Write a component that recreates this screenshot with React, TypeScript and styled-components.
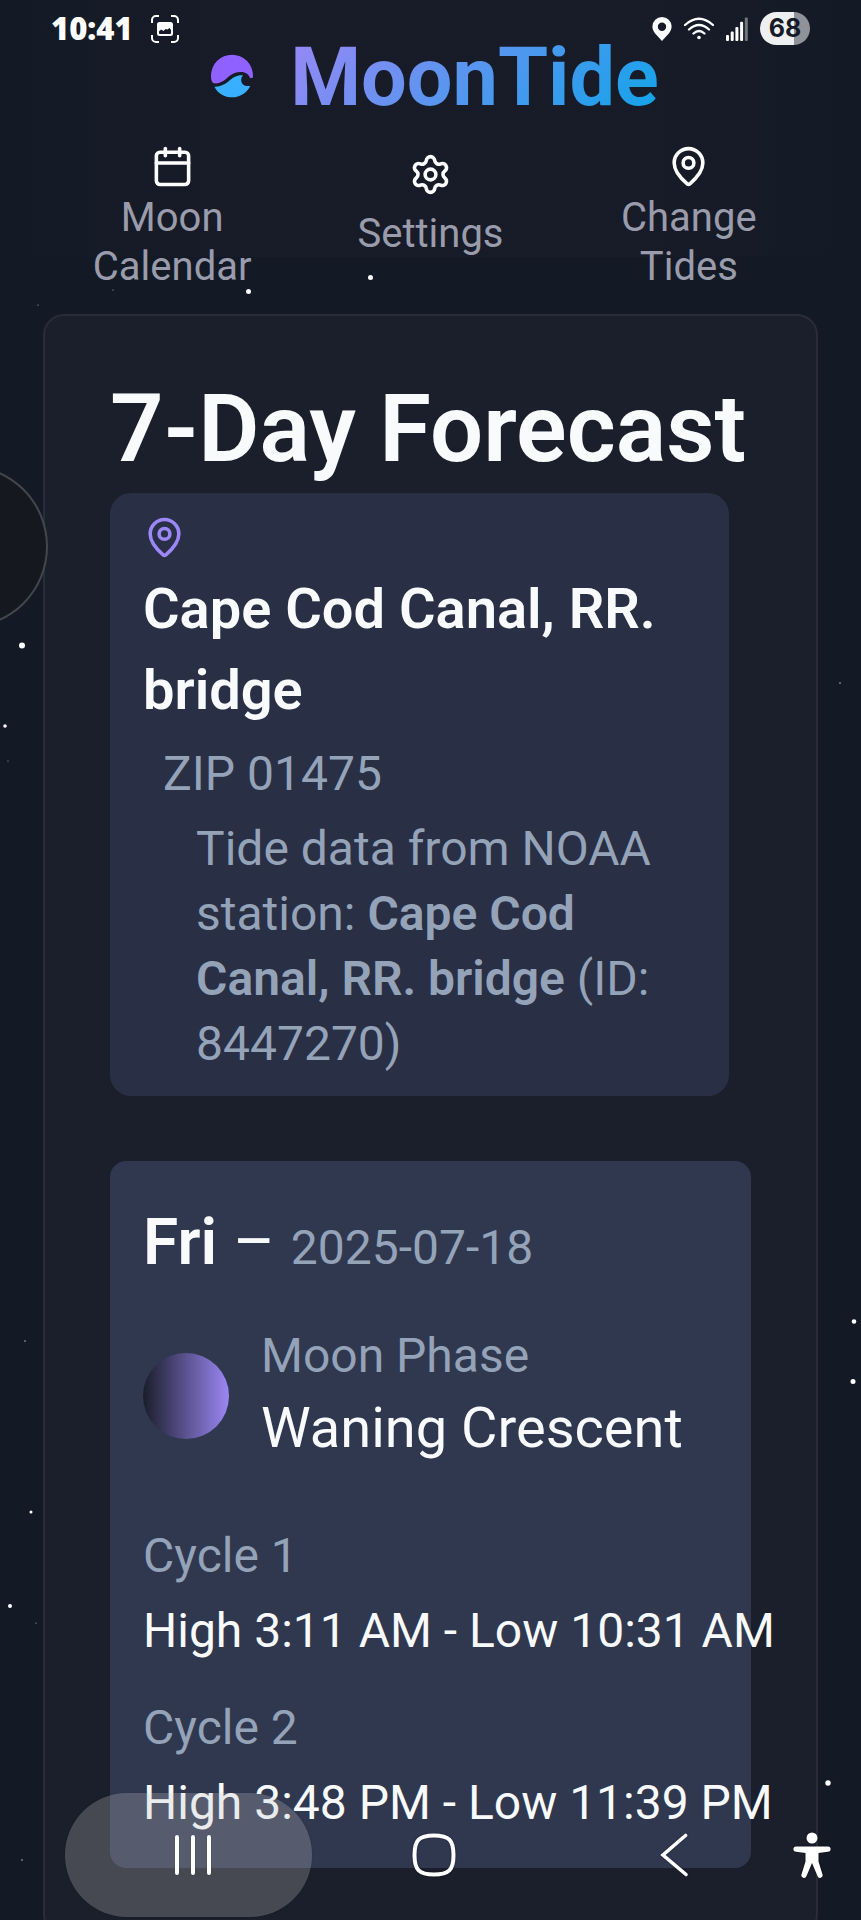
import React from 'react';
import styled, { createGlobalStyle } from 'styled-components';
import { Calendar, MapPin, Settings } from 'lucide-react';

const GlobalStyle = createGlobalStyle`
  *, *::before, *::after { box-sizing: border-box; }
  body {
    margin: 0;
    background: #131a26;
    color: #f8fafc;
    font-family: Roboto, "Liberation Sans", sans-serif;
  }
  h1, h2, h3, p { margin: 0; font-weight: 400; }
  button { border: 0; padding: 0; background: none; color: inherit; font: inherit; }
`;

const Screen = styled.div`
  position: relative;
  height: 100vh;
  overflow: hidden;
  background: #131a26;
`;

const StarField = styled.svg`
  position: absolute;
  inset: 0;
  width: 100%;
  height: 100%;
  pointer-events: none;
`;

/* Device status bar, floating over the page header */
const StatusBar = styled.div`
  position: absolute;
  top: 12px;
  left: 0;
  right: 0;
  z-index: 3;
  display: flex;
  align-items: center;
  justify-content: space-between;
  height: 33px;
  padding: 0 51px;
`;

const StatusGroup = styled.div<{ $gap: number }>`
  display: flex;
  align-items: center;
  gap: ${({ $gap }) => $gap}px;
`;

const Clock = styled.time`
  font: 800 31px/33px "Open Sans", "Noto Sans", sans-serif;
  color: #fff;
`;

const Battery = styled.span`
  display: flex;
  align-items: center;
  justify-content: center;
  width: 50px;
  height: 33px;
  border-radius: 17px;
  background: linear-gradient(90deg, #eeeff1 68%, #90929a 68%);
  color: #161b28;
  font: 700 25px/33px Inter, "Liberation Sans", sans-serif;
`;

const Header = styled.header`
  position: relative;
  z-index: 2;
  padding: 29px 43px 0;
  background:
    linear-gradient(90deg, rgba(32, 29, 44, 0) 0%, rgba(32, 29, 44, 0.35) 25%, rgba(32, 29, 44, 0.35) 75%, rgba(32, 29, 44, 0) 100%)
    0 0 / 100% 257px no-repeat;
`;

const Brand = styled.div`
  display: flex;
  align-items: center;
  justify-content: center;
  gap: 28px;
`;

const BrandName = styled.span`
  font-size: 81px;
  line-height: 97px;
  font-weight: 700;
  background: linear-gradient(135deg, #9b87f5, #0ea5e9);
  background-clip: text;
  -webkit-background-clip: text;
  color: transparent;
`;

const Nav = styled.nav`
  display: grid;
  grid-template-columns: repeat(3, 1fr);
  align-items: start;
  margin-top: 19px;
`;

const NavItem = styled.button<{ $single?: boolean }>`
  display: flex;
  flex-direction: column;
  align-items: center;
  gap: ${({ $single }) => ($single ? 13 : 5)}px;
  padding: ${({ $single }) => ($single ? 8 : 0)}px 32px 0;
  color: #fff;
`;

const NavLabel = styled.span`
  font-size: 40px;
  line-height: 49px;
  color: #9a9cab;
  text-align: center;
`;

const Panel = styled.main`
  position: relative;
  margin: 23px 43px 0;
  padding: 65px;
  border: 2px solid #2a2c39;
  border-radius: 21px;
  background: #1b1e2b;
`;

const Title = styled.h1`
  font-size: 94px;
  line-height: 97px;
  font-weight: 600;
  white-space: nowrap;
`;

const LocationCard = styled.section`
  display: flex;
  flex-direction: column;
  align-items: flex-start;
  gap: 10px;
  margin: 15px 22px 65px 0;
  padding: 23px 33px 20px;
  border-radius: 21px;
  background: #292f45;
`;

const StationName = styled.h2`
  font-size: 56px;
  line-height: 81px;
  font-weight: 600;
`;

const Zip = styled.p`
  padding-left: 20px;
  font-size: 48px;
  line-height: 65px;
  color: #94a3b8;
`;

const StationNote = styled.p`
  padding-left: 53px;
  font-size: 48px;
  line-height: 65px;
  color: #94a3b8;

  strong { font-weight: 600; }
`;

const DayCard = styled.article`
  padding: 33px;
  border-radius: 16px;
  background: #303850;
`;

const DayHeading = styled.h3`
  font-size: 64px;
  line-height: 97px;
  font-weight: 600;
  white-space: nowrap;
`;

const Dash = styled.span`
  font-weight: 400;
`;

const DayDate = styled.time`
  font-size: 48px;
  line-height: 65px;
  font-weight: 400;
  color: #94a3b8;
`;

const PhaseRow = styled.div`
  display: flex;
  align-items: center;
  gap: 32px;
  margin: 32px 0 54px;
`;

const MoonDisc = styled.span`
  flex: none;
  width: 86px;
  height: 86px;
  border-radius: 50%;
  background: linear-gradient(90deg, #1b1e2b, #9b87f5);
`;

const Muted = styled.p`
  font-size: 48px;
  line-height: 65px;
  color: #94a3b8;
`;

const PhaseName = styled.p`
  font-size: 56px;
  line-height: 81px;
  white-space: nowrap;
`;

const Cycles = styled.div`
  display: flex;
  flex-direction: column;
  gap: 32px;
`;

const Cycle = styled.div`
  display: flex;
  flex-direction: column;
  gap: 10px;
`;

const Tides = styled.p`
  font-size: 48px;
  line-height: 65px;
  white-space: nowrap;
`;

/* Round edge handle, half off the left side of the screen */
const EdgeHandle = styled.button`
  position: absolute;
  z-index: 2;
  top: 465px;
  left: -115px;
  width: 163px;
  height: 163px;
  border: 2px solid rgba(255, 255, 255, 0.2);
  border-radius: 50%;
  background: rgba(21, 24, 29, 0.95);
`;

const SystemNav = styled.div`
  position: absolute;
  z-index: 3;
  bottom: 3px;
  left: 0;
  right: 0;
  display: grid;
  grid-template-columns: 247fr 243fr 238fr 38px;
  height: 124px;
  padding: 0 30px 0 65px;
`;

const SystemButton = styled.button<{ $pressed?: boolean }>`
  display: flex;
  align-items: center;
  justify-content: center;
  border-radius: 62px;
  padding-left: ${({ $pressed }) => ($pressed ? 8 : 0)}px;
  background: ${({ $pressed }) => ($pressed ? 'rgba(255, 255, 255, 0.2)' : 'none')};
  filter: drop-shadow(0 0 1px rgba(0, 0, 0, 0.4));

  svg { flex: none; }
`;

const stars: [number, number, number][] = [
  [113, 290, 0.6], [248.5, 291.5, 2.5], [370.5, 277.5, 2.5], [38, 305, 0.6],
  [22, 645.5, 3], [5, 726, 1.8], [8, 761, 0.6], [840, 683, 0.8],
  [25, 1341, 0.8], [854, 1321.5, 2.3], [853, 1381.5, 2.5], [31, 1512, 1.5],
  [10, 1606, 2], [36, 1623, 0.6], [22, 1860, 0.8], [828, 1783, 2.7],
];

const cycles = [
  { name: 'Cycle 1', tides: 'High 3:11 AM - Low 10:31 AM' },
  { name: 'Cycle 2', tides: 'High 3:48 PM - Low 11:39 PM' },
];

const Logo = () => (
  <svg width="60" height="60" viewBox="66 53 180 180" aria-hidden="true">
    <path
      fill="#8f61fe"
      d="M99 158C94 152 93 145 93 136A63 63 0 0 1 219 136Q219 143 217 143L210 143C207 132 196 124 180 125C160 126 148 137 138 146C127 155 114 162 99 158Z"
    />
    <path
      fill="#38b0ff"
      d="M103 169C120 170 134 163 146 153C158 142 170 134 189 135C182 143 182 153 187 160C193 167 202 168 211 167C200 188 180 201 157 201C133 201 113 189 103 169Z"
    />
  </svg>
);

const CaptureIcon = () => (
  <svg width="28" height="28" viewBox="0 0 28 28" fill="none" aria-hidden="true">
    <path
      d="M1 8V5a4 4 0 0 1 4-4h3M20 1h3a4 4 0 0 1 4 4v3M27 20v3a4 4 0 0 1-4 4h-3M8 27H5a4 4 0 0 1-4-4v-3"
      stroke="#fff"
      strokeWidth="2"
    />
    <path
      fill="#fff"
      fillRule="evenodd"
      d="M8.500 7h11A2.500 2.500 0 0 1 22 9.500v9a2.500 2.500 0 0 1-2.500 2.500h-11A2.500 2.500 0 0 1 6 18.500v-9A2.500 2.500 0 0 1 8.500 7ZM8 18q0 1 1 1h10q1 0 1-1v-3l-1.500-2-2 1.500-2-0.500-2 2-2.500-1.500L8 16.500Z"
    />
  </svg>
);

const LocationIcon = () => (
  <svg width="20" height="24" viewBox="0 0 20 24" aria-hidden="true">
    <path
      fill="#fff"
      fillRule="evenodd"
      d="M10 0a9.600 9.600 0 0 1 9.600 9.600C19.600 15 15 18.500 10 24 5 18.500 0.400 15 0.400 9.600A9.600 9.600 0 0 1 10 0Zm0 5.500a4.200 4.200 0 1 0 0 8.400 4.200 4.200 0 0 0 0-8.400Z"
    />
  </svg>
);

const WifiIcon = () => (
  <svg width="30" height="24" viewBox="0 0 30 24" fill="none" stroke="#fff" strokeWidth="2.300" aria-hidden="true">
    <path d="M1 8Q15-4.500 29 8M5 12.500Q15 3.500 25 12.500M9.500 16.500Q15 11.500 20.500 16.500" strokeLinecap="round" />
    <circle cx="15" cy="20.500" r="1.800" fill="#fff" stroke="none" />
  </svg>
);

const SignalIcon = () => (
  <svg width="22" height="24" viewBox="0 0 22 24" fill="#fff" aria-hidden="true">
    <rect x="0" y="18" width="3" height="6" rx="1" />
    <rect x="4.700" y="14.500" width="3" height="9.500" rx="1" />
    <rect x="9.400" y="10" width="3" height="14" rx="1" />
    <rect x="14.100" y="4.700" width="3" height="19.300" rx="1" />
    <rect x="18.800" y="0.600" width="3" height="23.400" rx="1" opacity="0.400" />
  </svg>
);

export default function App() {
  return (
    <Screen>
      <GlobalStyle />
      <StarField aria-hidden="true">
        {stars.map(([x, y, r]) => (
          <circle key={`${x}-${y}`} cx={x} cy={y} r={r} fill="#fff" opacity={r < 1 ? 0.7 : 1} />
        ))}
      </StarField>

      <StatusBar>
        <StatusGroup $gap={18}>
          <Clock>10:41</Clock>
          <CaptureIcon />
        </StatusGroup>
        <StatusGroup $gap={12}>
          <LocationIcon />
          <WifiIcon />
          <SignalIcon />
          <Battery>68</Battery>
        </StatusGroup>
      </StatusBar>

      <Header>
        <Brand>
          <Logo />
          <BrandName>MoonTide</BrandName>
        </Brand>
        <Nav>
          <NavItem type="button">
            <Calendar size={43} />
            <NavLabel>Moon Calendar</NavLabel>
          </NavItem>
          <NavItem type="button" $single>
            <Settings size={43} />
            <NavLabel>Settings</NavLabel>
          </NavItem>
          <NavItem type="button">
            <MapPin size={43} />
            <NavLabel>Change Tides</NavLabel>
          </NavItem>
        </Nav>
      </Header>

      <Panel>
        <Title>7-Day Forecast</Title>
        <LocationCard>
          <MapPin size={43} color="#9b87f5" />
          <StationName>Cape Cod Canal, RR. bridge</StationName>
          <Zip>ZIP 01475</Zip>
          <StationNote>
            Tide data from NOAA station: <strong>Cape Cod Canal, RR. bridge</strong> (ID: 8447270)
          </StationNote>
        </LocationCard>

        <DayCard>
          <DayHeading>
            Fri <Dash>–</Dash> <DayDate dateTime="2025-07-18">2025-07-18</DayDate>
          </DayHeading>
          <PhaseRow>
            <MoonDisc />
            <div>
              <Muted>Moon Phase</Muted>
              <PhaseName>Waning Crescent</PhaseName>
            </div>
          </PhaseRow>
          <Cycles>
            {cycles.map((cycle) => (
              <Cycle key={cycle.name}>
                <Muted>{cycle.name}</Muted>
                <Tides>{cycle.tides}</Tides>
              </Cycle>
            ))}
          </Cycles>
        </DayCard>
      </Panel>

      <EdgeHandle type="button" aria-label="Open edge panel" />

      <SystemNav>
        <SystemButton type="button" aria-label="Recent apps" $pressed>
          <svg width="40" height="44" viewBox="0 0 40 44" stroke="#fff" strokeWidth="4" strokeLinecap="round">
            <path d="M4 4v36M20 4v36M36 4v36" />
          </svg>
        </SystemButton>
        <SystemButton type="button" aria-label="Home">
          <svg width="44" height="44" viewBox="0 0 44 44" fill="none" stroke="#fff" strokeWidth="4">
            <path d="M22 2.500C37 2.500 41.500 7 41.500 22S37 41.500 22 41.500 2.500 37 2.500 22 7 2.500 22 2.500Z" />
          </svg>
        </SystemButton>
        <SystemButton type="button" aria-label="Back">
          <svg width="28" height="44" viewBox="0 0 28 44" fill="none" stroke="#fff" strokeWidth="3.600" strokeLinecap="round">
            <path d="M25.500 2.500L3 22l23 19.500" />
          </svg>
        </SystemButton>
        <SystemButton type="button" aria-label="Accessibility">
          <svg width="38" height="46" viewBox="0 0 38 46" fill="#fff">
            <circle cx="19" cy="6" r="5.500" />
            <path d="M3 14.500h32a2.500 2.500 0 0 1 0 5.200L25.500 21v8.500l4 13a2.600 2.600 0 0 1-5 1.600L19 31l-5.500 13.100a2.600 2.600 0 0 1-5-1.600l4-13V21L3 19.700a2.500 2.500 0 0 1 0-5.200Z" />
          </svg>
        </SystemButton>
      </SystemNav>
    </Screen>
  );
}
